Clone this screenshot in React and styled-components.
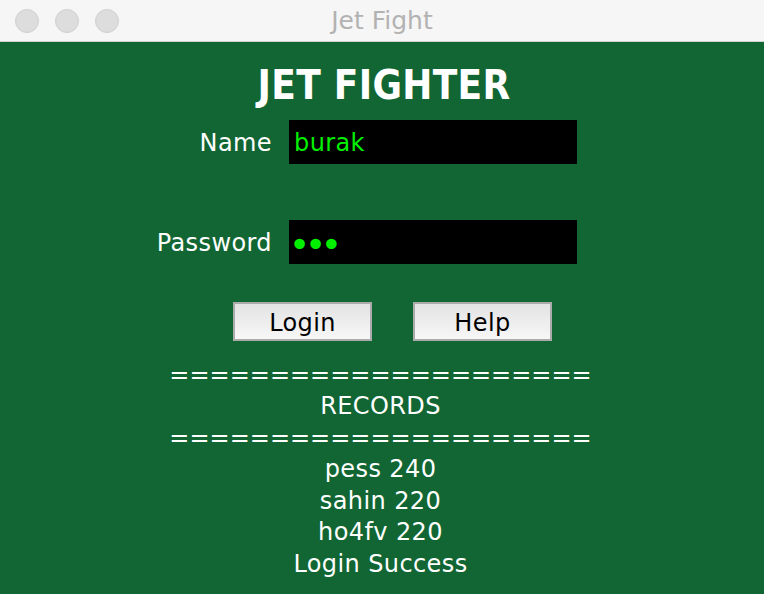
import React from "react";
import styled, { createGlobalStyle } from "styled-components";

const Global = createGlobalStyle`
  html, body { margin: 0; padding: 0; background: #116633; }
  body { font-family: "DejaVu Sans", "Liberation Sans", sans-serif; }
  #root { min-height: 594px; }
`;

const Window = styled.div`
  width: 764px;
  height: 594px;
  display: flex;
  flex-direction: column;
  background: #116633;
  overflow: hidden;
`;

const TitleBar = styled.div`
  height: 41px;
  flex: none;
  background: #f6f6f6;
  border-bottom: 1px solid #d2d2d2;
  display: grid;
  grid-template-columns: 1fr auto 1fr;
  align-items: center;
`;

const Lights = styled.div`
  display: flex;
  gap: 16px;
  padding-left: 15px;
`;

const Light = styled.span`
  width: 22px;
  height: 22px;
  border-radius: 50%;
  background: #dddddd;
  border: 1px solid #d0d0d0;
`;

const WinTitle = styled.div`
  font-family: "DejaVu Sans", sans-serif;
  font-size: 25px;
  line-height: 30px;
  color: #b2b2b2;
  padding-top: 1px;
`;

const Content = styled.div`
  flex: 1;
  display: flex;
  flex-direction: column;
  color: #ffffff;
  font-size: 24px;
  letter-spacing: 0.4px;
`;

const Heading = styled.h1`
  margin: 23px 0 0;
  padding-left: 4px;
  text-align: center;
  font-family: "DejaVu Sans Condensed", "DejaVu Sans", sans-serif;
  font-stretch: condensed;
  font-weight: bold;
  font-size: 40px;
  line-height: 40px;
  letter-spacing: 0.3px;
  color: #ffffff;
`;

const Form = styled.div`
  display: grid;
  grid-template-columns: 272px 288px;
  column-gap: 17px;
  row-gap: 56px;
  margin-top: 15px;
`;

const Label = styled.div`
  text-align: right;
  line-height: 46px;
  height: 44px;
`;

const Field = styled.div`
  background: #000000;
  height: 44px;
  line-height: ${(p) => (p.$secret ? "49px" : "46px")};
  padding-left: ${(p) => (p.$secret ? "0" : "5px")};
  color: #00f000;
  font-size: ${(p) => (p.$secret ? "36px" : "24px")};
  letter-spacing: ${(p) => (p.$secret ? "-5.3px" : "0.4px")};
  overflow: hidden;
`;

const Buttons = styled.div`
  display: flex;
  gap: 41px;
  padding-left: 233px;
  margin-top: 38px;
`;

const Button = styled.button`
  width: 139px;
  height: 39px;
  box-sizing: border-box;
  border: 2px solid #ababab;
  background: linear-gradient(#e3e3e3, #f7f7f7);
  font-family: "DejaVu Sans", sans-serif;
  font-size: 24px;
  letter-spacing: 0.4px;
  line-height: 35px;
  padding: 2px 0 0;
  color: #000000;
  margin: 0;
`;

const Records = styled.div`
  margin-top: 18.5px;
  display: flex;
  flex-direction: column;
  align-items: center;
  line-height: 31.6px;
  white-space: pre;
  padding-right: 3px;
`;

const Line = styled.div`
  letter-spacing: ${(p) => (p.$rule ? "0" : "0.4px")};
`;

export default function App() {
  const sep = "=====================";
  return (
    <>
      <Global />
      <Window>
        <TitleBar>
          <Lights>
            <Light />
            <Light />
            <Light />
          </Lights>
          <WinTitle>Jet Fight</WinTitle>
          <div />
        </TitleBar>
        <Content>
          <Heading>JET FIGHTER</Heading>
          <Form>
            <Label>Name</Label>
            <Field>burak</Field>
            <Label>Password</Label>
            <Field $secret>•••</Field>
          </Form>
          <Buttons>
            <Button>Login</Button>
            <Button>Help</Button>
          </Buttons>
          <Records>
            <Line $rule>{sep}</Line>
            <Line>RECORDS</Line>
            <Line $rule>{sep}</Line>
            <Line>pess 240</Line>
            <Line>sahin 220</Line>
            <Line>ho4fv 220</Line>
            <Line>Login Success</Line>
          </Records>
        </Content>
      </Window>
    </>
  );
}
